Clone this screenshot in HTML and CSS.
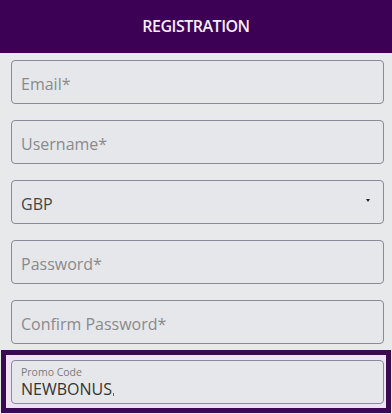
FILE: index.html
```html
<!DOCTYPE html>
<html lang="en">
<head>
<meta charset="utf-8">
<title>Registration</title>
<link rel="stylesheet" href="styles.css">
</head>
<body>
<header class="topbar">REGISTRATION</header>
<form class="form">
  <div class="field"><span class="placeholder">Email*</span></div>
  <div class="field"><span class="placeholder">Username*</span></div>
  <div class="field select"><span class="value">GBP</span><span class="arrow"></span></div>
  <div class="field"><span class="placeholder">Password*</span></div>
  <div class="field"><span class="placeholder">Confirm Password*</span></div>
  <div class="promo">
    <div class="field promo-field">
      <span class="label">Promo Code</span>
      <span class="promo-value">NEWBONUS<span class="caret"></span></span>
    </div>
  </div>
</form>
</body>
</html>
```
FILE: styles.css
```css
html, body {
  margin: 0;
  padding: 0;
}
body {
  background: #e8e9eb;
  font-family: "Open Sans", "Liberation Sans", sans-serif;
  width: 392px;
  height: 414px;
  overflow: hidden;
}
.topbar {
  height: 53px;
  background: #3c0055;
  color: #f6eefa;
  display: flex;
  align-items: center;
  justify-content: center;
  font-size: 16px;
  font-weight: 600;
  letter-spacing: -0.5px;
  padding-bottom: 2px;
  box-sizing: border-box;
}
.form {
  display: flex;
  flex-direction: column;
  gap: 16px;
  padding-top: 7px;
}
.field {
  box-sizing: border-box;
  height: 44px;
  margin: 0 8px 0 11px;
  border: 1px solid #8b8a9b;
  border-radius: 4px;
  background: #e6e7ea;
  display: flex;
  align-items: center;
  padding: 3px 9px 0 9px;
  font-size: 16px;
}
.placeholder {
  color: #8a8a8c;
}
.select {
  justify-content: space-between;
}
.value {
  color: #454545;
}
.arrow {
  width: 0;
  height: 0;
  border-left: 2px solid transparent;
  border-right: 2px solid transparent;
  border-top: 3px solid #222;
  margin-right: 4px;
  margin-top: -6px;
}
.promo {
  margin: -10px 1px 0 1px;
  border: 5px solid #3a0a50;
  background: #efe2f5;
  padding: 5px 2px 4px 5px;
}
.promo .promo-field {
  margin: 0;
  flex-direction: column;
  align-items: flex-start;
  justify-content: center;
  padding: 0 9px;
}
.label {
  font-size: 10.5px;
  color: #7a7a7c;
  line-height: 13px;
}
.promo-value {
  color: #333;
  line-height: 20px;
  display: inline-flex;
  align-items: flex-end;
}
.caret {
  display: inline-block;
  width: 1px;
  height: 3px;
  background: #666;
  margin-left: 1px;
  margin-bottom: 3px;
}
```
